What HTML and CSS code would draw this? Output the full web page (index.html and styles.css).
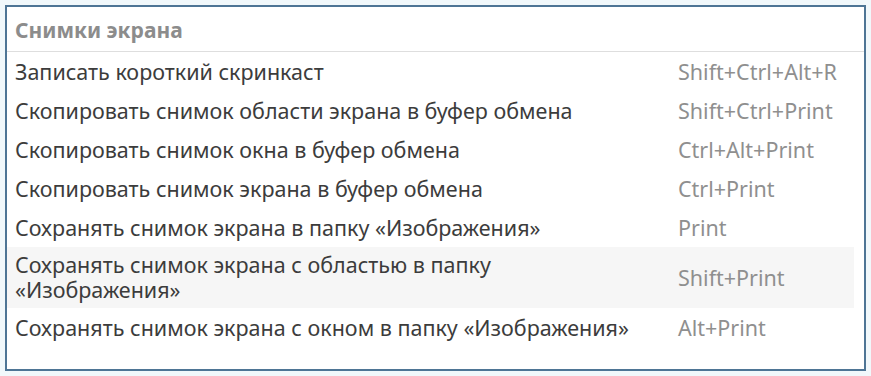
FILE: index.html
```html
<!DOCTYPE html>
<html lang="ru">
<head>
    <meta charset="UTF-8">
    <title>Комбинации клавиш</title>
    <link rel="stylesheet" href="styles.css">
</head>
<body>

    <div class="shortcuts">
        <div class="section-title">Снимки экрана</div>
        <ul class="shortcut-list">
            <li class="shortcut">
                <span class="action">Записать короткий скринкаст</span>
                <span class="keys">Shift+Ctrl+Alt+R</span>
            </li>
            <li class="shortcut">
                <span class="action">Скопировать снимок области экрана в буфер обмена</span>
                <span class="keys">Shift+Ctrl+Print</span>
            </li>
            <li class="shortcut">
                <span class="action">Скопировать снимок окна в буфер обмена</span>
                <span class="keys">Ctrl+Alt+Print</span>
            </li>
            <li class="shortcut">
                <span class="action">Скопировать снимок экрана в буфер обмена</span>
                <span class="keys">Ctrl+Print</span>
            </li>
            <li class="shortcut">
                <span class="action">Сохранять снимок экрана в папку «Изображения»</span>
                <span class="keys">Print</span>
            </li>
            <li class="shortcut selected">
                <span class="action">Сохранять снимок экрана с областью в папку «Изображения»</span>
                <span class="keys">Shift+Print</span>
            </li>
            <li class="shortcut">
                <span class="action">Сохранять снимок экрана с окном в папку «Изображения»</span>
                <span class="keys">Alt+Print</span>
            </li>
        </ul>
    </div>

</body>
</html>
```

FILE: styles.css
```css
body {
    font-family: 'Noto Sans', 'DejaVu Sans', sans-serif;
    background-color: #f1f8fb;
    color: #3c3c3c;
    margin: 0;
    padding: 5px;
}
.shortcuts {
    background-color: #fff;
    border: 2px solid #4e7595;
    height: 366px;
    box-sizing: border-box;
    width: 861px;
}
.section-title {
    height: 44px;
    line-height: 46px;
    padding-left: 8px;
    font-size: 21px;
    font-weight: 700;
    color: #8c8c8c;
    border-bottom: 1px solid #dedede;
}
.shortcut-list {
    list-style: none;
    margin: 0 10px 0 0;
    padding: 0;
}
.shortcut {
    display: grid;
    grid-template-columns: 671px 1fr;
    align-items: center;
    min-height: 39px;
    font-size: 21.5px;
    line-height: 25px;
}
.shortcut.selected {
    background-color: #f6f6f6;
    padding: 5px 0 6px;
}
.action {
    padding-left: 8px;
    padding-right: 38px;
}
.keys {
    color: #8f8f8f;
}
```
